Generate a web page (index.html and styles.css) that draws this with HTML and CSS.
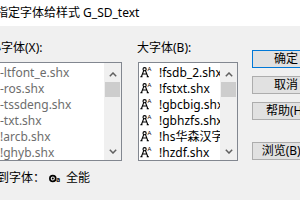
FILE: index.html
```html
<!DOCTYPE html>
<html lang="zh-CN">
<head>
<meta charset="utf-8">
<title>指定字体给样式</title>
<link rel="stylesheet" href="styles.css">
</head>
<body>
<div class="dialog">
  <div class="titlebar"><span class="title">指定字体给样式 G_SD_text</span></div>
  <div class="body">
    <div class="main">
      <div class="labels">
        <span class="lbl lbl-small">小字体(X):</span>
        <span class="lbl lbl-big">大字体(B):</span>
      </div>
      <div class="lists">
        <div class="listbox disabled">
          <ul class="items">
            <li><svg class="ico" viewBox="0 0 13 12"><use href="#shx"/></svg><span>-ltfont_e.shx</span></li>
            <li><svg class="ico" viewBox="0 0 13 12"><use href="#shx"/></svg><span>-ros.shx</span></li>
            <li><svg class="ico" viewBox="0 0 13 12"><use href="#shx"/></svg><span>-tssdeng.shx</span></li>
            <li><svg class="ico" viewBox="0 0 13 12"><use href="#shx"/></svg><span>-txt.shx</span></li>
            <li><svg class="ico" viewBox="0 0 13 12"><use href="#shx"/></svg><span>!arcb.shx</span></li>
            <li><svg class="ico" viewBox="0 0 13 12"><use href="#shx"/></svg><span>!ghyb.shx</span></li>
          </ul>
          <div class="scrollbar">
            <div class="sb-btn sb-up"><svg viewBox="0 0 8 5"><path d="M0.8 4.2 L4 1 L7.2 4.2"/></svg></div>
            <div class="sb-thumb"></div>
            <div class="sb-track"></div>
            <div class="sb-btn sb-down"><svg viewBox="0 0 8 5"><path d="M0.8 0.8 L4 4 L7.2 0.8"/></svg></div>
          </div>
        </div>
        <div class="listbox">
          <ul class="items">
            <li><svg class="ico" viewBox="0 0 13 12"><use href="#shx"/></svg><span>!fsdb_2.shx</span></li>
            <li><svg class="ico" viewBox="0 0 13 12"><use href="#shx"/></svg><span>!fstxt.shx</span></li>
            <li><svg class="ico" viewBox="0 0 13 12"><use href="#shx"/></svg><span>!gbcbig.shx</span></li>
            <li><svg class="ico" viewBox="0 0 13 12"><use href="#shx"/></svg><span>!gbhzfs.shx</span></li>
            <li><svg class="ico" viewBox="0 0 13 12"><use href="#shx"/></svg><span>!hs华森汉字</span></li>
            <li><svg class="ico" viewBox="0 0 13 12"><use href="#shx"/></svg><span>!hzdf.shx</span></li>
          </ul>
          <div class="scrollbar">
            <div class="sb-btn sb-up"><svg viewBox="0 0 8 5"><path d="M0.8 4.2 L4 1 L7.2 4.2"/></svg></div>
            <div class="sb-thumb"></div>
            <div class="sb-track"></div>
            <div class="sb-btn sb-down"><svg viewBox="0 0 8 5"><path d="M0.8 0.8 L4 4 L7.2 0.8"/></svg></div>
          </div>
        </div>
      </div>
      <div class="mapto">
        <span>映射到字体：</span>
        <svg class="tt" viewBox="0 0 12 9"><circle cx="3.8" cy="4.5" r="2.9"/><circle class="dot" cx="3.8" cy="4.5" r="1"/><text x="7.2" y="8.2">a</text></svg>
        <span>全能</span>
      </div>
    </div>
    <div class="buttons">
      <div class="btn default">确定</div>
      <div class="btn">取消</div>
      <div class="btn">帮助(H)</div>
      <div class="btn browse">浏览(B)...</div>
    </div>
  </div>
  <svg class="defs" width="0" height="0">
    <defs>
      <g id="shx" fill="none" stroke="currentColor" stroke-width="1.1">
        <circle cx="4.6" cy="3.2" r="1.6"/>
        <path d="M3.7 4.6 L1.4 10.8 M5.5 4.6 L7.8 10.8 M2.3 8 H6.9 M0.3 10.8 H2.5 M6.7 10.8 H8.9"/>
        <text x="7.6" y="5" font-size="6" font-family="Noto Sans, sans-serif" fill="currentColor" stroke="none">A</text>
      </g>
    </defs>
  </svg>
</div>
</body>
</html>
```
FILE: styles.css
```css
html, body {
  margin: 0;
  padding: 0;
}
body {
  width: 300px;
  height: 200px;
  overflow: hidden;
  background: #f0f0f0;
  font-family: "Noto Sans", "Noto Sans CJK SC", sans-serif;
  font-size: 12px;
  color: #000;
}
.dialog {
  width: 300px;
  height: 200px;
  overflow: hidden;
  position: relative;
}
.defs {
  position: absolute;
  width: 0;
  height: 0;
}
.titlebar {
  height: 26px;
  background: #fff;
  display: flex;
  align-items: center;
  line-height: 16px;
}
.title {
  margin-left: -4px;
  white-space: nowrap;
}
.body {
  display: flex;
  background: #f0f0f0;
}
.main {
  margin-left: -21px;
  width: 259px;
  flex: none;
}
.labels {
  margin-top: 14px;
  height: 16px;
  line-height: 16px;
  display: grid;
  grid-template-columns: 143px 100px;
  column-gap: 16px;
  white-space: nowrap;
}
.lbl-small {
  padding-left: 10px;
}
.lbl-big {
  margin-left: -1px;
}
.lists {
  margin-top: 6px;
  display: grid;
  grid-template-columns: 143px 100px;
  column-gap: 16px;
}
.listbox {
  height: 99px;
  box-sizing: border-box;
  border: 1px solid #828790;
  background: #fff;
  display: flex;
  overflow: hidden;
}
.items {
  list-style: none;
  margin: 0;
  padding: 2px 0 0 1px;
  flex: 1;
  min-width: 0;
  overflow: hidden;
}
.items li {
  height: 16px;
  line-height: 16px;
  display: flex;
  align-items: center;
  white-space: nowrap;
}
.ico {
  width: 13px;
  height: 12px;
  flex: none;
  margin-right: 6px;
  margin-top: -3px;
  color: #000;
}
.disabled .items li {
  color: #6d6d6d;
}
.disabled .ico {
  color: #6d6d6d;
}
.scrollbar {
  width: 17px;
  flex: none;
  background: #f0f0f0;
  display: flex;
  flex-direction: column;
}
.sb-btn {
  display: flex;
  justify-content: center;
}
.sb-up {
  height: 19px;
  align-items: flex-start;
}
.sb-up svg {
  margin-top: 9px;
}
.sb-down {
  height: 17px;
  align-items: center;
}
.sb-btn svg {
  width: 8px;
  height: 5px;
  fill: none;
  stroke: #606060;
  stroke-width: 1.5;
}
.sb-thumb {
  height: 15px;
  margin: 0 1px;
  background: #cdcdcd;
  flex: none;
}
.sb-track {
  flex: 1;
}
.mapto {
  margin-top: 9px;
  margin-left: -6px;
  height: 16px;
  line-height: 16px;
  display: flex;
  align-items: center;
  white-space: nowrap;
}
.tt {
  width: 12px;
  height: 9px;
  margin: 0 5px 0 4px;
}
.tt circle {
  fill: none;
  stroke: #000;
  stroke-width: 1.7;
}
.tt circle.dot {
  fill: #000;
  stroke: none;
}
.tt text {
  font-size: 6.5px;
  font-weight: bold;
  font-family: "Noto Sans", sans-serif;
}
.buttons {
  margin-left: 14px;
  padding-top: 24px;
  display: flex;
  flex-direction: column;
  gap: 8px;
  flex: none;
}
.btn {
  width: 68px;
  height: 18px;
  box-sizing: border-box;
  border: 1px solid #adadad;
  background: #e1e1e1;
  display: flex;
  align-items: center;
  justify-content: center;
  white-space: nowrap;
  line-height: 16px;
}
.btn.default {
  border-color: #0078d7;
}
.btn.browse {
  margin-top: 14px;
}
```
